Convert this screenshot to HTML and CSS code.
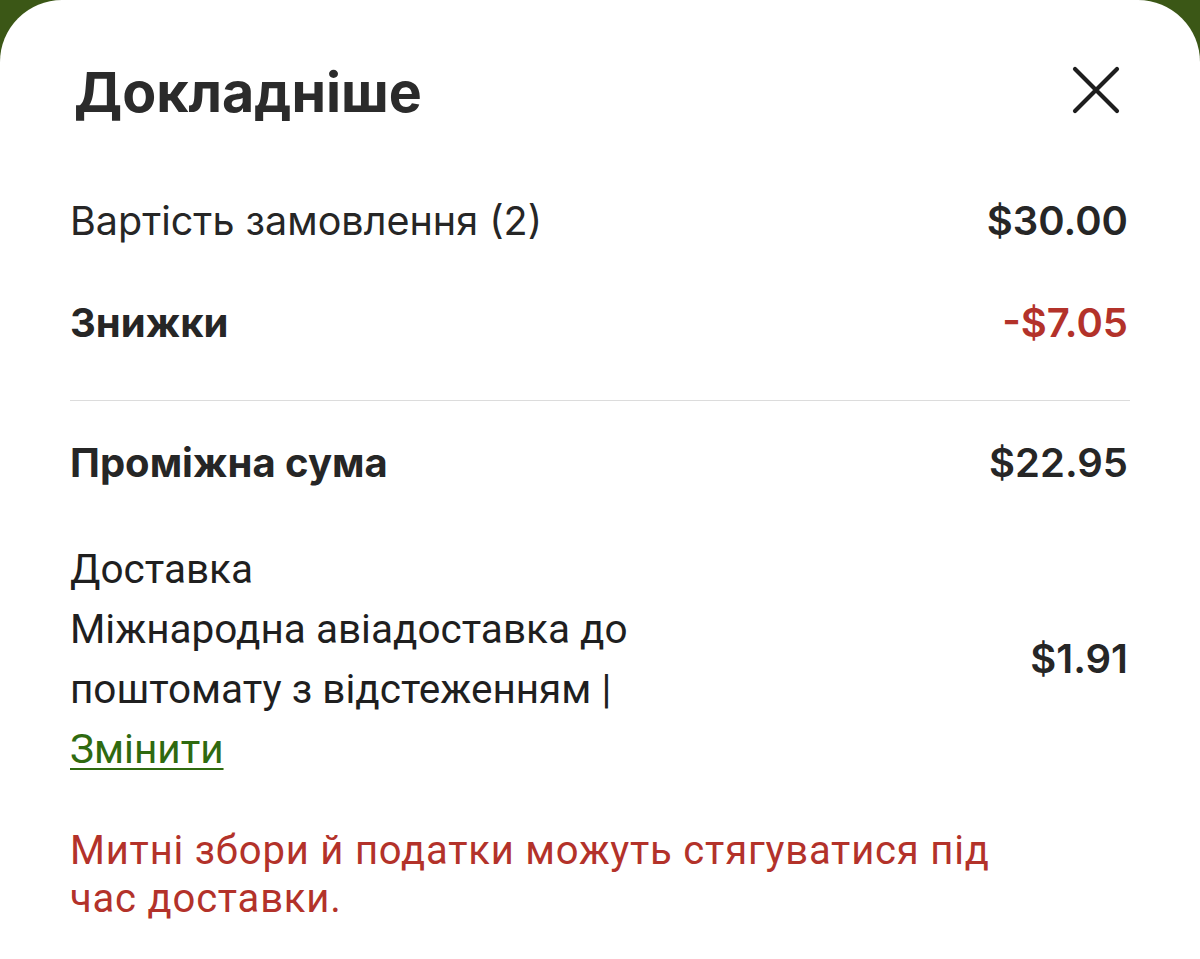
FILE: index.html
```html
<!DOCTYPE html>
<html lang="uk">
<head>
<meta charset="utf-8">
<title>Докладніше</title>
<link rel="stylesheet" href="styles.css">
</head>
<body>
<div class="sheet">
  <header class="header">
    <h1 class="title">Докладніше</h1>
    <button class="close" aria-label="Закрити">
      <svg width="48" height="48" viewBox="0 0 48 48"><path d="M3 3 L45 45 M45 3 L3 45" stroke="#1e1e1e" stroke-width="4.2" stroke-linecap="round" fill="none"/></svg>
    </button>
  </header>
  <div class="row row-first">
    <span class="label regular">Вартість замовлення (2)</span>
    <span class="amount">$30.00</span>
  </div>
  <div class="row row-second">
    <span class="label strong">Знижки</span>
    <span class="amount discount">-$7.05</span>
  </div>
  <hr class="divider">
  <div class="row">
    <span class="label strong">Проміжна сума</span>
    <span class="amount">$22.95</span>
  </div>
  <div class="delivery">
    <div class="delivery-text">
      <div>Доставка</div>
      <div>Міжнародна авіадоставка до поштомату з відстеженням |</div>
      <a class="change" href="#">Змінити</a>
    </div>
    <span class="amount">$1.91</span>
  </div>
  <p class="notice">Митні збори й податки можуть стягуватися під час доставки.</p>
</div>
</body>
</html>
```

FILE: styles.css
```css
html, body {
  margin: 0;
  padding: 0;
}
body {
  background: #3b5716;
  width: 1200px;
  height: 959px;
  overflow: hidden;
  font-family: Inter, "Liberation Sans", Arial, sans-serif;
  color: #262626;
}
.sheet {
  background: #ffffff;
  border-radius: 62px 62px 0 0;
  height: 959px;
  padding: 0 70px;
  box-sizing: border-box;
}
.header {
  display: flex;
  align-items: center;
  justify-content: space-between;
  padding-top: 62px;
}
.title {
  margin: 0 0 0 4px;
  font-size: 55.5px;
  line-height: 60px;
  font-weight: 700;
  color: #2b2b2b;
}
.close {
  background: none;
  border: 0;
  padding: 0;
  margin-right: 10px;
  width: 48px;
  height: 48px;
  display: flex;
  margin-top: -5px;
}
.row {
  display: flex;
  justify-content: space-between;
  align-items: center;
  font-size: 40px;
  line-height: 48px;
}
.row-first {
  margin-top: 75px;
}
.row-second {
  margin-top: 54px;
}
.label {
  color: #262626;
}
.regular {
  font-size: 39.5px;
}
.strong {
  font-weight: 700;
}
.amount {
  font-weight: 600;
  font-size: 40px;
  line-height: 48px;
  color: #262626;
  margin-right: 2px;
}
.discount {
  color: #b3322a;
}
.divider {
  border: 0;
  border-top: 1.5px solid #dcdcdc;
  margin: 53px 0 38px;
}
.delivery {
  display: flex;
  justify-content: space-between;
  align-items: center;
  margin-top: 52px;
}
.delivery-text {
  font-family: Roboto, "Liberation Sans", sans-serif;
  font-size: 40.5px;
  line-height: 60px;
  width: 580px;
  color: #1f1f1f;
}
.change {
  color: #2f6a10;
  text-decoration: underline;
  text-decoration-thickness: 2px;
  text-underline-offset: 5px;
}
.notice {
  margin: 48px 0 0;
  font-family: Roboto, "Liberation Sans", sans-serif;
  font-size: 40px;
  line-height: 48px;
  letter-spacing: 0.8px;
  color: #b3322a;
  width: 960px;
}
```
